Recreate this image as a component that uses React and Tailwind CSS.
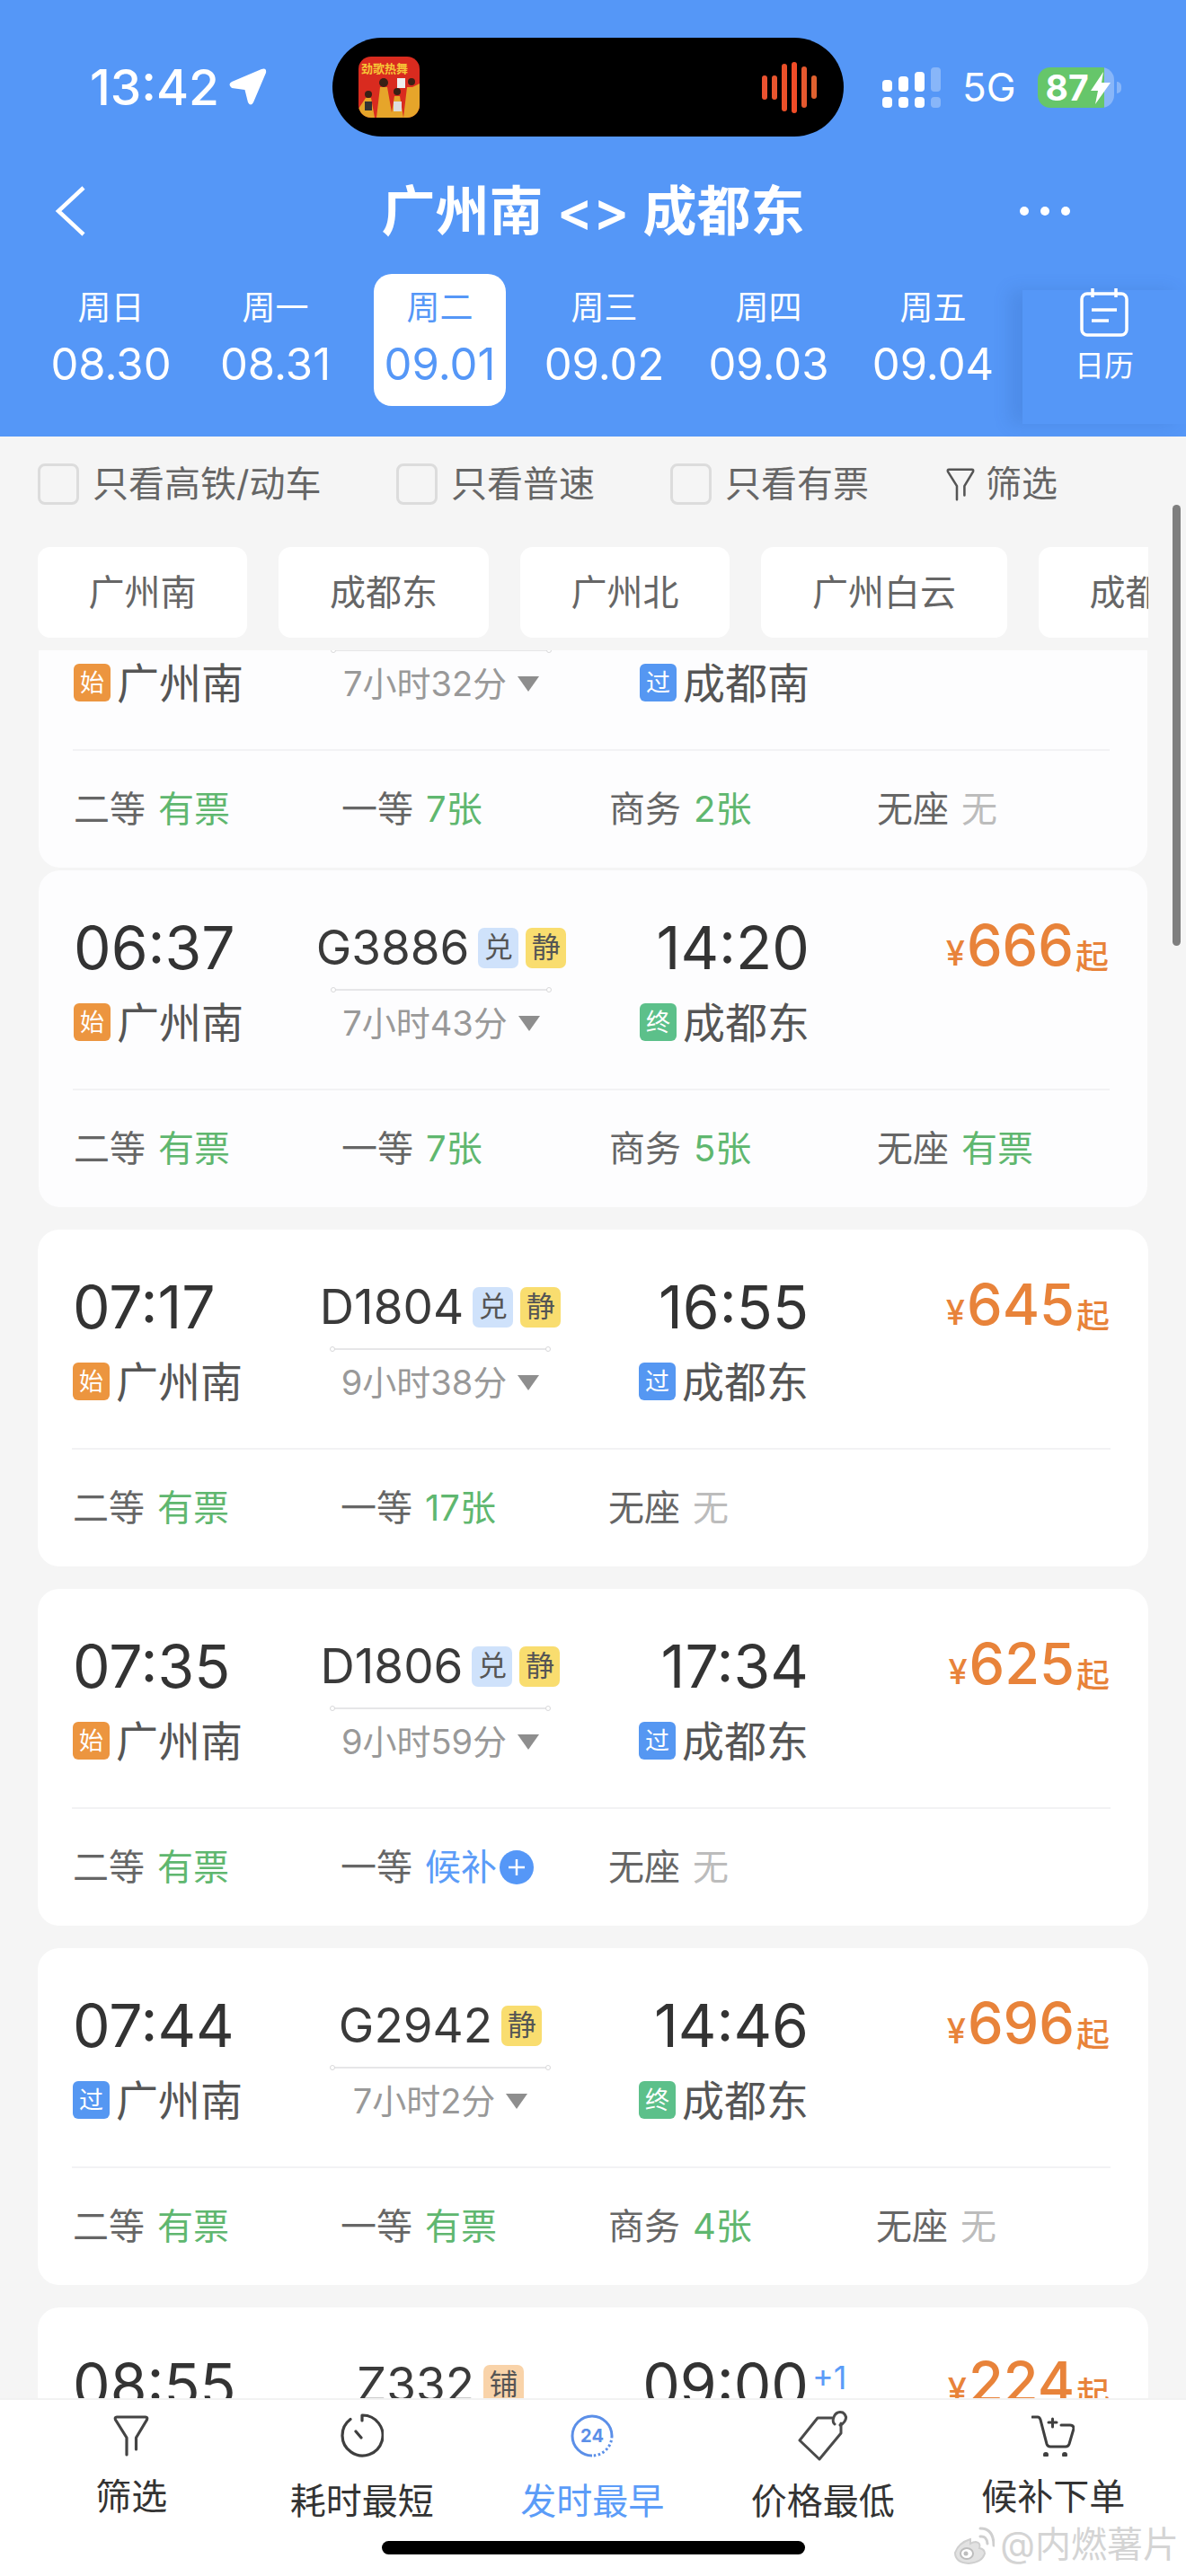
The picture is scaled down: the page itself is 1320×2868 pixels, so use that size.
import React from "react";

const stationTags = {
  始: "bg-[#ec953f]",
  过: "bg-[#5597f2]",
  终: "bg-[#5cc08a]",
};

const trainTags = {
  兑: "bg-[#cfe2fb]",
  静: "bg-[#f9dd6f]",
  铺: "bg-[#f9d3a9]",
};

const trains = [
  {
    from: ["始", "广州南"],
    to: ["过", "成都南"],
    duration: "7小时32分",
    seats: [["二等", "有票"], ["一等", "7张"], ["商务", "2张"], ["无座", "无"]],
    inset: true,
    first: true,
  },
  {
    start: "06:37",
    end: "14:20",
    code: "G3886",
    tags: ["兑", "静"],
    price: "666",
    from: ["始", "广州南"],
    to: ["终", "成都东"],
    duration: "7小时43分",
    seats: [["二等", "有票"], ["一等", "7张"], ["商务", "5张"], ["无座", "有票"]],
    inset: true,
  },
  {
    start: "07:17",
    end: "16:55",
    code: "D1804",
    tags: ["兑", "静"],
    price: "645",
    from: ["始", "广州南"],
    to: ["过", "成都东"],
    duration: "9小时38分",
    seats: [["二等", "有票"], ["一等", "17张"], ["无座", "无"]],
  },
  {
    start: "07:35",
    end: "17:34",
    code: "D1806",
    tags: ["兑", "静"],
    price: "625",
    from: ["始", "广州南"],
    to: ["过", "成都东"],
    duration: "9小时59分",
    seats: [["二等", "有票"], ["一等", "候补"], ["无座", "无"]],
  },
  {
    start: "07:44",
    end: "14:46",
    code: "G2942",
    tags: ["静"],
    price: "696",
    from: ["过", "广州南"],
    to: ["终", "成都东"],
    duration: "7小时2分",
    seats: [["二等", "有票"], ["一等", "有票"], ["商务", "4张"], ["无座", "无"]],
  },
  {
    start: "08:55",
    end: "09:00",
    nextDay: true,
    code: "Z332",
    tags: ["铺"],
    price: "224",
    from: ["始", "广州南"],
    to: ["终", "成都东"],
    duration: "",
    seats: [],
  },
];

const days = [
  ["周日", "08.30"],
  ["周一", "08.31"],
  ["周二", "09.01"],
  ["周三", "09.02"],
  ["周四", "09.03"],
  ["周五", "09.04"],
];

function FunnelIcon({ className }) {
  return (
    <svg viewBox="0 0 40 46" fill="none" stroke="currentColor" strokeWidth="3.2" strokeLinecap="round" strokeLinejoin="round" className={className}>
      <path d="M15 44V25L2.5 5Q1.5 2 4 2H36Q38.500 2 37.500 5L25.500 25V38" />
    </svg>
  );
}

function StatusBar() {
  const bars = [
    ["h-[27px]", "bg-[#ea5230]"],
    ["h-[27px]", "bg-[#e8552e]"],
    ["h-[53px]", "bg-[#ea5029]"],
    ["h-[57px]", "bg-[#f04c27]"],
    ["h-[46px]", "bg-[#e5582e]"],
    ["h-[26px]", "bg-[#e0612f]"],
  ];
  return (
    <div className="flex h-[152px] pt-[42px]">
      <div className="flex w-[370px] items-center gap-[11px] pl-[100px] text-[55px] font-medium text-white">
        <span className="leading-none">13:42</span>
        <svg viewBox="0 0 42 42" className="h-[42px] w-[42px]" fill="white">
          <path d="M3 15 L36 1 Q42 -1 41 5 L27 38 Q24 43 21 38 L17.500 24 L3 22 Q-2 18 3 15Z" />
        </svg>
      </div>
      <div className="flex h-[110px] w-[569px] items-center justify-between rounded-[55px] bg-black pl-[29px] pr-[30px]">
        <svg viewBox="0 0 68 68" className="h-[68px] w-[68px] rounded-[14px]">
          <rect width="68" height="68" fill="#d92b1f" />
          <text x="3" y="18" fontSize="13" fontWeight="700" fill="#f6c637">劲歌热舞</text>
          <path d="M0 68V58L8 46H14L18 68ZM20 68L24 34H32L38 68ZM36 68L40 44H46L50 68ZM50 68L54 34H60L68 30V68Z" fill="#e6a52a" />
          <circle cx="11" cy="42" r="4" fill="#3a2015" />
          <circle cx="28" cy="29" r="5" fill="#3a2015" />
          <circle cx="43" cy="39" r="4" fill="#3a2015" />
          <circle cx="59" cy="28" r="4" fill="#3a2015" />
          <rect x="43" y="24" width="9" height="11" fill="#eee" />
          <rect x="39" y="50" width="9" height="11" fill="#ddd" />
          <rect x="7" y="50" width="8" height="10" fill="#333" />
        </svg>
        <div className="flex items-center gap-[5px]">
          {bars.map(([h, color], i) => (
            <div key={i} className={`w-[6px] rounded-full ${h} ${color}`} />
          ))}
        </div>
      </div>
      <div className="flex items-center pl-[43px] text-white">
        <div className="grid w-[65px] grid-cols-4 items-end gap-x-[7px] gap-y-[6px]">
          <div className="h-[13px] rounded-[4px] bg-white" />
          <div className="h-[17px] rounded-[4px] bg-white" />
          <div className="h-[22px] rounded-[4px] bg-white" />
          <div className="h-[27px] rounded-[4px] bg-white/30" />
          <div className="h-[12px] rounded-[4px] bg-white" />
          <div className="h-[12px] rounded-[4px] bg-white" />
          <div className="h-[12px] rounded-[4px] bg-white" />
          <div className="h-[12px] rounded-[4px] bg-white/30" />
        </div>
        <span className="ml-[24px] text-[44px] leading-none">5G</span>
        <div className="relative ml-[24px] flex h-[45px] w-[85px] overflow-hidden rounded-[14px]">
          <div className="flex w-[74px] items-center bg-[#66c66a] pl-[9px] text-[39px] font-bold leading-none">
            87
          </div>
          <div className="flex-1 bg-white/30" />
          <svg viewBox="0 0 22 36" className="absolute left-[59px] top-[5px] h-[36px] w-[22px]" fill="white">
            <path d="M14 0 L0 21 H8 L5 36 L22 12 H12Z" />
          </svg>
        </div>
        <div className="ml-[3px] h-[13px] w-[5px] rounded-r-full bg-white/30" />
      </div>
    </div>
  );
}

function Header() {
  return (
    <div className="h-[486px] bg-[#5597f7] text-white">
      <StatusBar />
      <div className="mt-[18px] grid h-[130px] grid-cols-[1fr_auto_1fr] items-center">
        <div className="pl-[60px]">
          <svg viewBox="0 0 36 56" fill="none" stroke="white" strokeWidth="4.500" className="h-[56px] w-[36px]">
            <path d="M33 2 L5 28 L33 54" />
          </svg>
        </div>
        <div className="text-[60px] font-semibold leading-none">
          广州南 {"<>"} 成都东
        </div>
        <div className="flex justify-end gap-[13px] pr-[129px]">
          <div className="h-[10px] w-[10px] rounded-full bg-white" />
          <div className="h-[10px] w-[10px] rounded-full bg-white" />
          <div className="h-[10px] w-[10px] rounded-full bg-white" />
        </div>
      </div>
      <div className="mt-[5px] flex h-[147px] items-start pl-[32px]">
        {days.map(([week, date], i) => (
          <div key={week} className="flex w-[183px] justify-center">
            <div
              className={`flex h-[147px] w-[147px] flex-col items-center rounded-[20px] pt-[19px] ${
                i === 2 ? "bg-white text-[#5597f7]" : ""
              }`}>
              <div className="text-[37px] leading-[38px]">{week}</div>
              <div className="mt-[16px] whitespace-nowrap text-[49px] leading-[56px]">{date}</div>
            </div>
          </div>
        ))}
        <div className="ml-[8px] mt-[18px] flex h-[149px] flex-1 flex-col items-center shadow-[-14px_0_18px_rgba(40,80,150,0.16)]">
          <svg viewBox="0 0 54 54" fill="none" stroke="white" strokeWidth="3.500" className="-mt-[2px] h-[54px] w-[54px]">
            <rect x="2" y="6" width="50" height="46" rx="6" />
            <path d="M14 0V10M40 0V10M13 24H41M13 36H32" />
          </svg>
          <div className="mt-[14px] text-[33px] leading-[36px]">日历</div>
        </div>
      </div>
    </div>
  );
}

function FilterRow() {
  const boxes = [
    ["只看高铁/动车", "w-[399px]"],
    ["只看普速", "w-[305px]"],
    ["只看有票", "w-[307px]"],
  ];
  return (
    <div className="flex h-[106px] items-center pl-[42px] text-[40px] text-[#666]">
      {boxes.map(([label, w]) => (
        <div key={label} className={`flex items-center gap-[15px] ${w}`}>
          <div className="h-[46px] w-[46px] rounded-[8px] border-[3px] border-[#dcdcdc]" />
          <span className="leading-none">{label}</span>
        </div>
      ))}
      <FunnelIcon className="h-[37px] w-[32px] text-[#555]" />
      <span className="ml-[12px] leading-none">筛选</span>
    </div>
  );
}

function Chips() {
  const chips = [
    ["广州南", "w-[233px]"],
    ["成都东", "w-[234px]"],
    ["广州北", "w-[233px]"],
    ["广州白云", "w-[274px]"],
  ];
  return (
    <div className="ml-[42px] mt-[17px] flex h-[101px] w-[1236px] gap-[35px] overflow-hidden text-[40px] text-[#666]">
      {chips.map(([label, w]) => (
        <div key={label} className={`flex shrink-0 items-center justify-center rounded-[14px] bg-white ${w}`}>
          {label}
        </div>
      ))}
      <div className="flex w-[233px] shrink-0 items-center justify-center rounded-[14px] bg-white">成都南</div>
    </div>
  );
}

function Station({ tag, name }) {
  return (
    <div className="flex h-[46px] items-center gap-[7px]">
      <div className={`flex h-[42px] w-[41px] items-center justify-center rounded-[6px] text-[27px] leading-none text-white ${stationTags[tag]}`}>
        {tag}
      </div>
      <span className="whitespace-nowrap text-[47px] leading-none text-[#555]">{name}</span>
    </div>
  );
}

function SeatValue({ value }) {
  if (value === "候补") {
    return (
      <span className="flex items-center gap-[3px] text-[#5b9cf8]">
        候补
        <svg viewBox="0 0 38 38" className="h-[38px] w-[38px]">
          <circle cx="19" cy="19" r="19" fill="#5597f7" />
          <path d="M19 10V28M10 19H28" stroke="white" strokeWidth="2.500" />
        </svg>
      </span>
    );
  }
  return <span className={value === "无" ? "text-[#bcbcbc]" : "text-[#5fb76f]"}>{value}</span>;
}

function TrainCard({ train }) {
  return (
    <div
      className={`flex h-[375px] shrink-0 flex-col rounded-[24px] ${
        train.inset ? "mx-px bg-[#fdfdfe]" : "bg-white"
      } ${train.first ? "-mt-[133px] mb-[3px]" : "mb-[25px]"}`}>
      <div className="flex h-[243px] pl-[39px] pr-[43px] pt-[56px]">
        <div className="w-[251px]">
          <div className="flex h-[60px] items-center text-[66px] leading-none text-[#333]">{train.start}</div>
          <div className="mt-[30px]">
            <Station tag={train.from[0]} name={train.from[1]} />
          </div>
        </div>
        <div className="flex w-[316px] flex-col items-center">
          <div className="flex h-[60px] items-center gap-[8px]">
            <span className="mr-[2px] text-[53px] leading-none text-[#3a3a3a]">{train.code}</span>
            {train.tags?.map((t) => (
              <div key={t} className={`flex h-[45px] w-[45px] items-center justify-center rounded-[7px] text-[32px] leading-none text-[#555] ${trainTags[t]}`}>
                {t}
              </div>
            ))}
          </div>
          <div className="relative mt-[16px] h-[2px] w-[240px] bg-[#e6e6e8]">
            <div className="absolute -left-[3px] -top-[2px] h-[6px] w-[6px] rounded-full border border-[#d8d8da] bg-white" />
            <div className="absolute -right-[3px] -top-[2px] h-[6px] w-[6px] rounded-full border border-[#d8d8da] bg-white" />
          </div>
          <div className="mt-[13px] flex h-[46px] items-center gap-[12px] text-[38px] leading-none text-[#999]">
            {train.duration}
            <div className="h-0 w-0 border-x-[12px] border-t-[17px] border-x-transparent border-t-[#8e8e8e]" />
          </div>
        </div>
        <div className="flex w-[252px] flex-col items-end">
          <div className="relative flex h-[60px] items-center text-[66px] leading-none text-[#333]">
            {train.end}
            {train.nextDay && (
              <span className="absolute left-full top-[4px] ml-[4px] text-[36px] text-[#5b9cf8]">+1</span>
            )}
          </div>
          <div className="mt-[30px]">
            <Station tag={train.to[0]} name={train.to[1]} />
          </div>
        </div>
        {train.price && (
          <div className="flex h-[60px] flex-1 items-end justify-end pb-[1px] font-medium leading-none text-[#e8833a]">
            <span className="mb-[4px] mr-[2px] text-[38px]">¥</span>
            <span className="text-[63px]">{train.price}</span>
            <span className="ml-[2px] text-[37px]">起</span>
          </div>
        )}
      </div>
      <div className="ml-[38px] mr-[42px] h-[2px] bg-[#f2f2f4]" />
      <div className="flex flex-1 items-center pl-[39px] text-[40px] leading-none text-[#666]">
        {train.seats.map(([label, value]) => (
          <div key={label} className="flex w-[298px] items-center gap-[14px]">
            <span>{label}</span>
            <SeatValue value={value} />
          </div>
        ))}
      </div>
    </div>
  );
}

function TabBar() {
  const tabs = [
    {
      label: "筛选",
      lift: true,
      icon: <FunnelIcon className="h-[46px] w-[40px] text-[#444]" />,
    },
    {
      label: "耗时最短",
      icon: (
        <svg viewBox="0 0 48 50" fill="none" stroke="#3f3f3f" strokeWidth="3.200" strokeLinecap="round" className="h-[50px] w-[48px]">
          <path d="M24 2V8M24 2A22.500 22.500 0 1 1 11 6.500M17 20L23 27" />
        </svg>
      ),
    },
    {
      label: "发时最早",
      active: true,
      icon: (
        <svg viewBox="0 0 50 50" fill="none" stroke="#5b8fe8" strokeWidth="3" className="h-[50px] w-[50px]">
          <path d="M47 25A22 22 0 1 0 25 47" />
          <path d="M47 25A22 22 0 0 1 25 47" strokeDasharray="2.500 2.500" />
          <text x="25" y="32" textAnchor="middle" fontSize="20" fontWeight="700" fill="#5b8fe8" stroke="none">24</text>
        </svg>
      ),
    },
    {
      label: "价格最低",
      icon: (
        <svg viewBox="0 0 56 56" fill="none" stroke="#4a4a4a" strokeWidth="3" strokeLinecap="round" strokeLinejoin="round" className="h-[56px] w-[56px]">
          <path d="M38 8H22L2 33L24 54L48 25V14" />
          <path d="M41 15Q38 13 40 7Q43 0 50 2Q56 6 52 12Q50 15 47 16" />
        </svg>
      ),
    },
    {
      label: "候补下单",
      lift: true,
      icon: (
        <svg viewBox="0 0 48 46" fill="none" stroke="#3f3f3f" strokeWidth="3" strokeLinecap="round" strokeLinejoin="round" className="h-[46px] w-[48px]">
          <path d="M1 2H7Q9 2 10 5L17 32Q18 35 21 35H38Q41 35 42 32L47 15Q47 11 43 11H33" />
          <path d="M19 8H28M23.500 4V13" />
          <circle cx="16" cy="44" r="1.500" fill="#3f3f3f" />
          <circle cx="37" cy="44" r="1.500" fill="#3f3f3f" />
        </svg>
      ),
    },
  ];
  return (
    <div className="relative z-10 h-[198px] border-t-2 border-[#f2f2f2] bg-white">
      <div className="flex pl-[18px]">
        {tabs.map((t) => (
          <div key={t.label} className="flex w-[256.500px] flex-col items-center">
            <div className="flex h-[80px] items-center justify-center">{t.icon}</div>
            <div className={`text-[40px] leading-[40px] ${t.lift ? "mt-[8px]" : "mt-[13px]"} ${t.active ? "text-[#5b9cf8]" : "text-[#333]"}`}>
              {t.label}
            </div>
          </div>
        ))}
      </div>
      <div className="absolute bottom-[24px] left-[425px] h-[15px] w-[471px] rounded-full bg-black" />
      <div className="absolute bottom-[12px] right-[8px] flex items-center gap-[6px] text-[40px] leading-none text-[#d4d4d4] [text-shadow:0_0_3px_white]">
        <svg viewBox="0 0 46 46" fill="none" className="h-[46px] w-[46px]">
          <path d="M19 17Q6 21 2 32Q2 43 17 44Q32 43 35 33Q35 28 29 27Q31 21 25 20Q22 20 19 22Z" fill="#e2e2e2" stroke="#cfcfcf" strokeWidth="2" />
          <ellipse cx="15" cy="33" rx="7" ry="6" fill="white" stroke="#bdbdbd" strokeWidth="2" />
          <circle cx="14" cy="33" r="2.500" fill="#bdbdbd" />
          <path d="M30 14Q37 13 38 22M30 5Q45 5 45 24" stroke="#cfcfcf" strokeWidth="3" strokeLinecap="round" />
        </svg>
        <span>@内燃薯片</span>
      </div>
    </div>
  );
}

export default function App() {
  return (
    <div className="relative h-[2868px] w-[1320px] overflow-hidden bg-[#f5f5f5] font-['Inter','Noto_Sans_CJK_SC',sans-serif]">
      <Header />
      <FilterRow />
      <Chips />
      <div className="ml-[42px] mt-[14px] flex h-[1946px] w-[1236px] flex-col overflow-hidden">
        {trains.map((t, i) => (
          <TrainCard key={i} train={t} />
        ))}
      </div>
      <TabBar />
      {/* scrollbar */}
      <div className="absolute left-[1305px] top-[562px] h-[491px] w-[9px] rounded-full bg-[#7f7f7f]" />
    </div>
  );
}
